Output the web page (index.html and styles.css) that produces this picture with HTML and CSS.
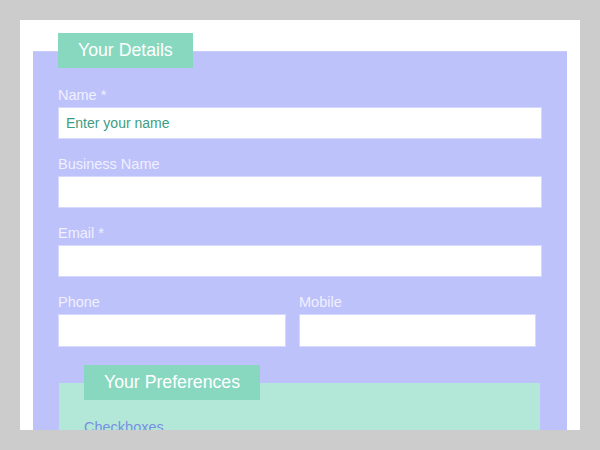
FILE: index.html
```html
<!DOCTYPE html>
<html>
<head>
<meta charset="utf-8">
<link rel="stylesheet" href="styles.css">
</head>
<body>
<div class="page">
  <div class="fieldset details">
    <div class="legend">Your Details</div>
    <div class="field first">
      <label class="label">Name *</label>
      <input class="input" type="text" placeholder="Enter your name">
    </div>
    <div class="field">
      <label class="label">Business Name</label>
      <input class="input" type="text">
    </div>
    <div class="field">
      <label class="label">Email *</label>
      <input class="input" type="text">
    </div>
    <div class="field-row">
      <div class="field">
        <label class="label">Phone</label>
        <input class="input tall" type="text">
      </div>
      <div class="field">
        <label class="label">Mobile</label>
        <input class="input tall" type="text">
      </div>
    </div>
    <div class="fieldset prefs">
      <div class="legend">Your Preferences</div>
      <div class="sub">Checkboxes</div>
    </div>
  </div>
</div>
</body>
</html>
```

FILE: styles.css
```css
html, body {
  margin: 0;
  padding: 0;
}
body {
  background: #cccccc;
  padding: 20px;
  height: 450px;
  box-sizing: border-box;
  font-family: "Liberation Sans", Arial, sans-serif;
}
.page {
  background: #ffffff;
  height: 410px;
  overflow: hidden;
  padding: 0 13px;
  box-sizing: border-box;
  padding-top: 31px;
}
.fieldset {
  box-sizing: border-box;
  display: flow-root;
}
.details {
  background: #bec2fb;
  border-top: 1px solid #c9ccfb;
  padding: 0 25px 40px 25px;
}
.legend {
  display: block;
  width: fit-content;
  background: #88d8c0;
  color: #ffffff;
  font-size: 17.7px;
  line-height: 35px;
  height: 35px;
  padding: 0 20px;
  margin-top: -19px;
}
.field {
  display: flex;
  flex-direction: column;
  margin-top: 16px;
}
.field.first {
  margin-top: 18px;
}
.label {
  color: #f0f0ff;
  font-size: 14.5px;
  line-height: 18px;
  margin-bottom: 3px;
}
.input {
  height: 32px;
  box-sizing: border-box;
  border: 1px solid #d6d9fd;
  background: #ffffff;
  padding: 0 7px;
  font-family: "Liberation Sans", Arial, sans-serif;
  font-size: 14px;
  color: #3c9c80;
  outline: none;
  margin: 0;
  width: 100%;
}
.input.tall {
  height: 33px;
}
.input::placeholder {
  color: #3d9d82;
  opacity: 1;
}
.field-row {
  display: grid;
  grid-template-columns: 228px 237px;
  column-gap: 13px;
}
.prefs {
  background: #b3e8d8;
  margin: 36px 2px 0 1px;
  padding: 0 25px 30px 25px;
}
.prefs .legend {
  margin-top: -18px;
}
.sub {
  margin-top: 18px;
  color: #7a8ee2;
  font-size: 14.5px;
  line-height: 18px;
}
```
